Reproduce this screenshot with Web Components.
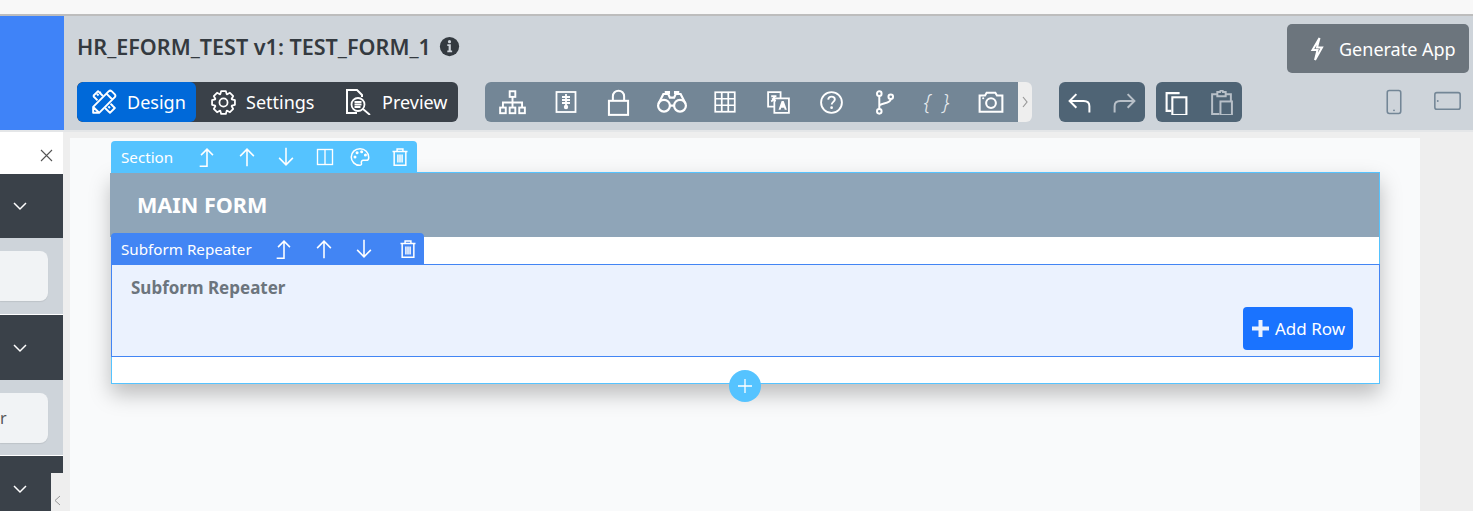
<!DOCTYPE html>
<html>
<head>
<meta charset="utf-8">
<title>Form designer</title>
<style>
  html, body { margin: 0; height: 511px; overflow: hidden; background: #eee; }
  body { font-family: "Noto Sans", "Open Sans", sans-serif; }
  form-designer { width: 1473px; height: 511px; }
</style>
</head>
<body>
<form-designer>
  <designer-header slot="header" title-text="HR_EFORM_TEST v1: TEST_FORM_1"></designer-header>
  <side-panel slot="side"></side-panel>
  <form-section slot="canvas" heading="MAIN FORM">
    <subform-repeater label="Subform Repeater"></subform-repeater>
  </form-section>
</form-designer>

<script>
// 8 tooth cog outline, centred on 12,12
function gearPath() {
  let d = "";
  for (let i = 0; i < 8; i++) {
    const a = i * Math.PI / 4;
    [[8.6, -0.36], [11.2, -0.2], [11.2, 0.2], [8.6, 0.36]].forEach(([r, o]) => {
      const x = (12 + r * Math.sin(a + o)).toFixed(2);
      const y = (12 - r * Math.cos(a + o)).toFixed(2);
      d += (d ? "L" : "M") + x + " " + y;
    });
  }
  return d + "z";
}

const ICONS = {
  design: '<g fill="none" stroke-width="1.800" stroke-linejoin="round"><path d="M2 6.500 6.500 2 11 6.500M13 17.500l4.500 4.500 4.500-4.500-4-4M2 6.500l4 4M5.500 4.500l1.500 1.500M8 2.800l1 1M16 16l1.500 1.500M19 14.500l1 1"/><path d="M2 22v-5.500L16.500 2a2 2 0 0 1 2.500 0l3 3a2 2 0 0 1 0 2.500L7.500 22zM14.500 4.500l5 5M2.500 17l4.500 4.500"/></g>',
  gear: '<g fill="none" stroke-width="1.700" stroke-linejoin="round"><circle cx="12" cy="12" r="3.900"/><path d="' + gearPath() + '"/></g>',
  preview: '<g fill="none" stroke-width="2"><path d="M12 24H2V1h10l5 5v2"/></g><g fill="none" stroke-width="1.800"><circle cx="13" cy="15.500" r="6.500"/><path d="m18 20 7 6M9.500 13h7M9.500 15.500h7M9.500 18h6"/></g>',
  sitemap: '<g fill="none" stroke-width="1.700"><rect x="9.500" y="2" width="5" height="5"/><rect x="1" y="16.500" width="5" height="5"/><rect x="9.500" y="16.500" width="5" height="5"/><rect x="18" y="16.500" width="5" height="5"/><path d="M12 7v9.500M3.500 16.500V12h17v4.500"/></g>',
  xray: '<g fill="none" stroke-width="1.800"><rect x="2.500" y="2" width="19" height="20"/><path d="M12 4v15M8 7h8M8 10h8M8 13h8"/></g><circle cx="12" cy="17" r="2.200"/>',
  lock: '<g fill="none" stroke-width="1.800"><rect x="3.500" y="10.500" width="17" height="12.500"/><path d="M7 10.500V6.500a5 5 0 0 1 10 0v4"/></g>',
  binoculars: '<g fill="none" stroke-width="1.800"><circle cx="6.500" cy="16" r="4.800"/><circle cx="19.500" cy="16" r="4.800"/><path d="M11.300 16h3.400M2 14.500 6 6.500h4l1.300 3h3.400L16 6.500h4l4 8M8 6.500V5h2.500v1.500M15.500 6.500V5H18v1.500"/></g>',
  table: '<g fill="none" stroke-width="1.600"><rect x="3" y="3" width="18" height="18"/><path d="M9 3v18M15 3v18M3 9h18M3 15h18"/></g>',
  translate: '<g fill="none" stroke-width="1.700"><path d="M14 8V2H2v14h6"/><path d="M14 8h8v14H8V8z"/><path d="M5 6h5M8 5v1c0 2-1.500 4-3 5M6 8c1 1.500 2 2 3.500 2.500"/></g><path d="m15 10.500-3 8.500h2l.6-2h2.800l.6 2h2l-3-8.500z"/>',
  question: '<g fill="none" stroke-width="1.800"><circle cx="12" cy="12" r="10"/><path d="M8.800 9.300c.2-2 1.500-3 3.300-3 1.900 0 3.100 1.200 3.100 2.700 0 2.300-3 2.500-3 5"/></g><circle cx="12.100" cy="17" r="1.300"/>',
  branch: '<g fill="none" stroke-width="1.900"><circle cx="7" cy="3.500" r="2.200"/><circle cx="7" cy="20.500" r="2.200"/><circle cx="18" cy="6.500" r="2.200"/><path d="M7 5.700v12.600M7 15.500c0-3 11-2 11-6.800"/></g>',
  camera: '<g fill="none" stroke-width="1.900"><path d="M1.500 6h5l1.500-2.500h8L17.500 6h5v15h-21z"/><circle cx="12" cy="13" r="4.500"/></g><circle cx="4.800" cy="8.500" r="1"/>',
  undo: '<g fill="none" stroke-width="1.900"><path d="M9 4 2.500 10.500 9 17M2.500 10.500H16c3.500 0 5.500 2 5.500 5v6"/></g>',
  redo: '<g fill="none" stroke-width="1.900"><path d="M15 4l6.500 6.500L15 17M21.500 10.500H8c-3.500 0-5.500 2-5.500 5v6"/></g>',
  copy: '<g fill="none" stroke-width="2"><path d="M15 3H2.500v17H7"/><rect x="8" y="7" width="13.500" height="17"/></g>',
  paste: '<g fill="none" stroke-width="1.900"><path d="M8 4H3v19h7M16 4h5v7"/><path d="M8 2h2.500a1.500 1.500 0 0 1 3 0H16v4H8z"/><rect x="11" y="11" width="11" height="13"/></g>',
  phone: '<g fill="none" stroke-width="1.500"><rect x="6" y="1.500" width="13" height="22" rx="2"/></g><circle cx="12.500" cy="20.500" r=".9"/>',
  tablet: '<g fill="none" stroke-width="1.500"><rect x=".8" y="3.500" width="24.400" height="16" rx="2"/></g><circle cx="3.600" cy="11.500" r=".9"/>',
  bolt: '<g fill="none" stroke-width="2" stroke-linejoin="miter"><path d="M14.500 1 7.500 13h5l-2.500 10 7-12.500h-5z"/></g>',
  info: '<circle cx="12" cy="12" r="11"/><path fill="#ced4da" d="M9.500 9.500h4v7h1.500v2H9.500v-2H11v-5H9.500z"/><circle cx="12" cy="6.500" r="1.800" fill="#ced4da"/>',
  upTop: '<g fill="none" stroke-width="1.700"><path d="M4 22h8V4M5.500 10 12 3.500l6.500 6.500"/></g>',
  up: '<g fill="none" stroke-width="1.700"><path d="M12 22V3.500M4.500 11 12 3.500l7.500 7.500"/></g>',
  down: '<g fill="none" stroke-width="1.700"><path d="M12 2v18.500M4.500 13l7.500 7.500 7.500-7.500"/></g>',
  columns: '<g fill="none" stroke-width="1.800"><rect x="2" y="2" width="20" height="20"/><path d="M12 2v20"/></g>',
  palette: '<g fill="none" stroke-width="1.800"><path d="M12 2C6 2 1.500 6.500 1.500 12S6 22 11.500 22c2 0 2.700-1.200 2.200-2.700-.6-1.800.5-3.300 2.300-3.300h3.500c1.900 0 3-1.200 3-3.500C22.500 6.500 18 2 12 2z"/></g><circle cx="6" cy="12" r="1.800"/><circle cx="8.500" cy="7" r="1.800"/><circle cx="14" cy="5.800" r="1.800"/><circle cx="18.500" cy="9.500" r="1.800"/>',
  trash: '<g fill="none" stroke-width="1.800"><path d="M3 5.500h18M8.500 5.500V2.500h7v3M5 5.500V22h14V5.500M9.500 9v9.500M12 9v9.500M14.500 9v9.500"/></g>'
};

class UiIcon extends HTMLElement {
  connectedCallback() {
    const size = this.getAttribute("size") || 24;
    const color = this.getAttribute("color") || "#fff";
    const box = this.getAttribute("box") || "0 0 24 24";
    this.attachShadow({ mode: "open" }).innerHTML = `
      <style>
        :host { display: inline-flex; flex: none; }
        svg { display: block; fill: ${color}; }
        g { stroke: ${color}; }
      </style>
      <svg width="${size}" height="${size}" viewBox="${box}">${ICONS[this.getAttribute("name")] || ""}</svg>`;
  }
}
customElements.define("ui-icon", UiIcon);

const shellTemplate = document.createElement("template");
shellTemplate.innerHTML = `
  <style>
    :host { display: flex; flex-direction: column; }
    .strip { height: 14px; background: #f8f8f8; border-bottom: 2px solid #bdbdbd; }
    .main { display: flex; flex: 1; min-height: 0; background: #eee; border-top: 2px solid #e4e6e8; }
    .gutter { width: 7px; }
    .canvas { width: 1350px; margin-top: 6px; background: #f9fafb; padding: 34px 0 0 41px; box-sizing: border-box; }
  </style>
  <div class="strip"></div>
  <slot name="header"></slot>
  <div class="main">
    <slot name="side"></slot>
    <div class="gutter"></div>
    <div class="canvas"><slot name="canvas"></slot></div>
  </div>
`;
class FormDesigner extends HTMLElement {
  constructor() {
    super();
    this.attachShadow({ mode: "open" }).appendChild(shellTemplate.content.cloneNode(true));
  }
}
customElements.define("form-designer", FormDesigner);

const headerTemplate = document.createElement("template");
headerTemplate.innerHTML = `
  <style>
    :host { display: flex; height: 114px; background: #ced4da; color: #343a40; }
    .brand { width: 64px; background: #3f83f8; }
    .body { flex: 1; padding: 8px 4px 8px 13px; display: flex; flex-direction: column; gap: 9px; }
    .top { display: flex; justify-content: space-between; align-items: center; height: 49px; }
    .title { display: flex; align-items: center; gap: 8px; font-size: 21.550px; font-weight: 600; margin-top: -4px; }
    .generate { width: 182px; height: 49px; box-sizing: border-box; display: flex; align-items: center; gap: 10px; padding-left: 18px;
      background: #6c757d; border-radius: 5px; color: #fff; font-size: 18px; }
    .bar { display: flex; height: 40px; padding-right: 8px; }
    .group { display: flex; align-items: center; border-radius: 6px; color: #fff; }
    .modes { width: 381px; background: #3a4149; font-size: 18px; overflow: hidden; }
    .mode { display: flex; align-items: center; height: 100%; box-sizing: border-box; }
    .mode.on { width: 119px; background: #0069d9; padding-left: 14px; gap: 10px; border-radius: 6px; }
    .mode.settings { width: 133px; padding-left: 15px; gap: 10px; }
    .mode.preview { padding-left: 16px; gap: 11px; }
    .tools { margin-left: 27px; background: #738696; width: 533px; box-sizing: border-box; padding-left: 1px; border-radius: 6px 0 0 6px; }
    .tools span { display: flex; justify-content: center; align-items: center; width: 53.200px; }
    .tools i { font-size: 21px; color: #e8ecef; letter-spacing: 3px; font-weight: 300; }
    .handle { width: 14px; background: #eee; border-radius: 0 6px 6px 0; display: flex; align-items: center; justify-content: center; }
    .dark { background: #4f6475; width: 86px; justify-content: space-between; padding: 0 8px; box-sizing: border-box; }
    .undo { margin-left: 27px; }
    .copy { margin-left: 11px; }
    .devices { margin-left: auto; display: flex; align-items: center; gap: 27px; }
  </style>
  <div class="brand"></div>
  <div class="body">
    <div class="top">
      <div class="title"><span id="title"></span><ui-icon name="info" size="21" color="#343a40"></ui-icon></div>
      <div class="generate"><ui-icon name="bolt" size="24"></ui-icon><span>Generate App</span></div>
    </div>
    <div class="bar">
      <div class="group modes">
        <div class="mode on"><ui-icon name="design" size="26"></ui-icon><span>Design</span></div>
        <div class="mode settings"><ui-icon name="gear" size="25"></ui-icon><span>Settings</span></div>
        <div class="mode preview"><ui-icon name="preview" size="26" box="0 0 26 26"></ui-icon><span>Preview</span></div>
      </div>
      <div class="group tools">
        <span><ui-icon name="sitemap" size="27"></ui-icon></span>
        <span><ui-icon name="xray" size="24"></ui-icon></span>
        <span><ui-icon name="lock" size="27"></ui-icon></span>
        <span><ui-icon name="binoculars" size="32" box="0 0 26 26"></ui-icon></span>
        <span><ui-icon name="table" size="26"></ui-icon></span>
        <span><ui-icon name="translate" size="25"></ui-icon></span>
        <span><ui-icon name="question" size="25"></ui-icon></span>
        <span><ui-icon name="branch" size="25"></ui-icon></span>
        <span><i>{ }</i></span>
        <span><ui-icon name="camera" size="26"></ui-icon></span>
      </div>
      <div class="handle"><svg width="8" height="12" viewBox="0 0 8 12" fill="none" stroke="#999" stroke-width="1.200"><path d="m2 1 4 5-4 5"/></svg></div>
      <div class="group dark undo"><ui-icon name="undo" size="25"></ui-icon><ui-icon name="redo" size="25" color="#b8c0c8"></ui-icon></div>
      <div class="group dark copy"><ui-icon name="copy" size="25"></ui-icon><ui-icon name="paste" size="25" color="#b8c0c8"></ui-icon></div>
      <div class="devices"><ui-icon name="phone" size="26" box="0 0 25 25" color="#738696"></ui-icon><ui-icon name="tablet" size="27" box="0 0 26 26" color="#738696"></ui-icon></div>
    </div>
  </div>
`;
class DesignerHeader extends HTMLElement {
  constructor() {
    super();
    this.attachShadow({ mode: "open" }).appendChild(headerTemplate.content.cloneNode(true));
    this.shadowRoot.getElementById("title").textContent = this.getAttribute("title-text");
  }
}
customElements.define("designer-header", DesignerHeader);

const sideTemplate = document.createElement("template");
sideTemplate.innerHTML = `
  <style>
    :host { display: flex; flex-direction: column; width: 63px; height: 379px; position: relative; overflow: hidden; background: #fff; }
    .close { height: 42px; box-sizing: border-box; flex: none; display: flex; align-items: center; justify-content: flex-end; padding: 4px 10px 0 0; }
    .head { height: 64px; box-sizing: border-box; padding: 1px 0 0 13px; background: #3a4149; display: flex; align-items: center; flex: none; }
    .head.b { height: 65px; }
    .head.c { height: 55px; padding-top: 11px; }
    .body { height: 76px; background: #ced4da; display: flex; align-items: center; border-bottom: 1px solid #fff; flex: none; }
    .body.b { height: 75px; }
    .tile { width: 48px; height: 50px; background: #f1f3f5; border-radius: 0 8px 8px 0; box-shadow: 0 1px 1px rgba(0,0,0,.08);
      font-size: 16px; color: #555; display: flex; align-items: center; }
    .tab { position: absolute; right: 0; bottom: 0; width: 12px; height: 38px; background: #eee; display: flex; align-items: center; justify-content: center; padding-top: 16px; box-sizing: border-box; }
  </style>
  <div class="close"><svg width="13" height="13" viewBox="0 0 13 13" stroke="#555" stroke-width="1.100"><path d="m1 1 11 11M12 1 1 12"/></svg></div>
  <div class="head"><svg width="14" height="9" viewBox="0 0 14 9" fill="none" stroke="#fff" stroke-width="1.500"><path d="m1 1 6 6 6-6"/></svg></div>
  <div class="body"><div class="tile"></div></div>
  <div class="head b"><svg width="14" height="9" viewBox="0 0 14 9" fill="none" stroke="#fff" stroke-width="1.500"><path d="m1 1 6 6 6-6"/></svg></div>
  <div class="body b"><div class="tile">r</div></div>
  <div class="head c"><svg width="14" height="9" viewBox="0 0 14 9" fill="none" stroke="#fff" stroke-width="1.500"><path d="m1 1 6 6 6-6"/></svg></div>
  <div class="tab"><svg width="7" height="11" viewBox="0 0 7 11" fill="none" stroke="#999" stroke-width="1"><path d="M6 1 1 5.500 6 10"/></svg></div>
`;
class SidePanel extends HTMLElement {
  constructor() {
    super();
    this.attachShadow({ mode: "open" }).appendChild(sideTemplate.content.cloneNode(true));
  }
}
customElements.define("side-panel", SidePanel);

const barTemplate = document.createElement("template");
barTemplate.innerHTML = `
  <style>
    :host { display: flex; align-items: center; height: var(--bar-h, 31px); width: var(--bar-w, 306px); box-sizing: border-box;
      padding-left: 10px; background: var(--bar-bg, #55c3ff); color: #fff; font-size: 15.200px; border-radius: 4px 4px 0 0; }
    .label { width: var(--label-w, 75px); flex: none; }
    ::slotted(ui-icon) { margin-right: var(--icon-gap, 18px); }
  </style>
  <span class="label"></span>
  <slot></slot>
`;
class ElementBar extends HTMLElement {
  constructor() {
    super();
    this.attachShadow({ mode: "open" }).appendChild(barTemplate.content.cloneNode(true));
    this.shadowRoot.querySelector(".label").textContent = this.getAttribute("label");
  }
}
customElements.define("element-bar", ElementBar);

const sectionTemplate = document.createElement("template");
sectionTemplate.innerHTML = `
  <style>
    :host { display: block; position: relative; width: 1269px; box-sizing: border-box; background: #fff; border: 1px solid #55c3ff;
      box-shadow: 0 10px 20px rgba(0,0,0,.25); }
    element-bar { position: absolute; left: -1px; top: -32px; }
    h2 { margin: 0 0 27px -2px; height: 64px; box-sizing: border-box; padding: 0 0 2px 27px; display: flex; align-items: center; background: #8fa5b8; color: #fff; font-size: 21.600px; font-weight: 700; }
    .slot { display: block; padding-bottom: 26px; margin: 0 -1px; }
    .add { position: absolute; left: 617px; bottom: -19px; width: 32px; height: 32px; border-radius: 50%; background: #55c3ff; display: flex; align-items: center; justify-content: center; }
  </style>
  <element-bar label="Section">
    <ui-icon name="upTop" size="22"></ui-icon>
    <ui-icon name="up" size="22" style="margin-right:17px"></ui-icon>
    <ui-icon name="down" size="22" style="margin-right:19px"></ui-icon>
    <ui-icon name="columns" size="18" style="margin-right:16px"></ui-icon>
    <ui-icon name="palette" size="20" style="margin-right:20px"></ui-icon>
    <ui-icon name="trash" size="20"></ui-icon>
  </element-bar>
  <h2 id="heading"></h2>
  <div class="slot"><slot></slot></div>
  <div class="add"><svg width="16" height="16" viewBox="0 0 16 16" stroke="#fff" stroke-width="1.300"><path d="M8 1v14M1 8h14"/></svg></div>
`;
class FormSection extends HTMLElement {
  constructor() {
    super();
    this.attachShadow({ mode: "open" }).appendChild(sectionTemplate.content.cloneNode(true));
    this.shadowRoot.getElementById("heading").textContent = this.getAttribute("heading");
  }
}
customElements.define("form-section", FormSection);

const repeaterTemplate = document.createElement("template");
repeaterTemplate.innerHTML = `
  <style>
    :host { display: block; position: relative; height: 93px; box-sizing: border-box; background: #ebf2fe; border: 1px solid #4285f4; padding: 12px 26px 0 19px; }
    element-bar { position: absolute; left: -1px; top: -32px; --bar-h: 32px; --bar-w: 313px; --bar-bg: #4285f4; --label-w: 152px; }
    .label { font-size: 17px; font-weight: 700; color: #6c757d; line-height: 22px; }
    .row { display: flex; justify-content: flex-end; margin-top: 8px; }
    .add { width: 110px; height: 43px; box-sizing: border-box; background: #1a73ff; color: #fff; border-radius: 4px; font-size: 17px; display: flex; align-items: center; gap: 6px; padding-left: 9px; }
  </style>
  <element-bar label="">
    <ui-icon name="upTop" size="22"></ui-icon>
    <ui-icon name="up" size="22"></ui-icon>
    <ui-icon name="down" size="22" style="margin-right:23px"></ui-icon>
    <ui-icon name="trash" size="20"></ui-icon>
  </element-bar>
  <div class="label"></div>
  <div class="row"><div class="add"><svg width="17" height="17" viewBox="0 0 17 17" fill="#ebf2fe"><path d="M6.500 0h4v6.500H17v4h-6.500V17h-4v-6.500H0v-4h6.500z"/></svg><span>Add Row</span></div></div>
`;
class SubformRepeater extends HTMLElement {
  constructor() {
    super();
    this.attachShadow({ mode: "open" }).appendChild(repeaterTemplate.content.cloneNode(true));
    const text = this.getAttribute("label");
    this.shadowRoot.querySelector(".label").textContent = text;
    this.shadowRoot.querySelector("element-bar").shadowRoot.querySelector(".label").textContent = text;
  }
}
customElements.define("subform-repeater", SubformRepeater);
</script>
</body>
</html>
